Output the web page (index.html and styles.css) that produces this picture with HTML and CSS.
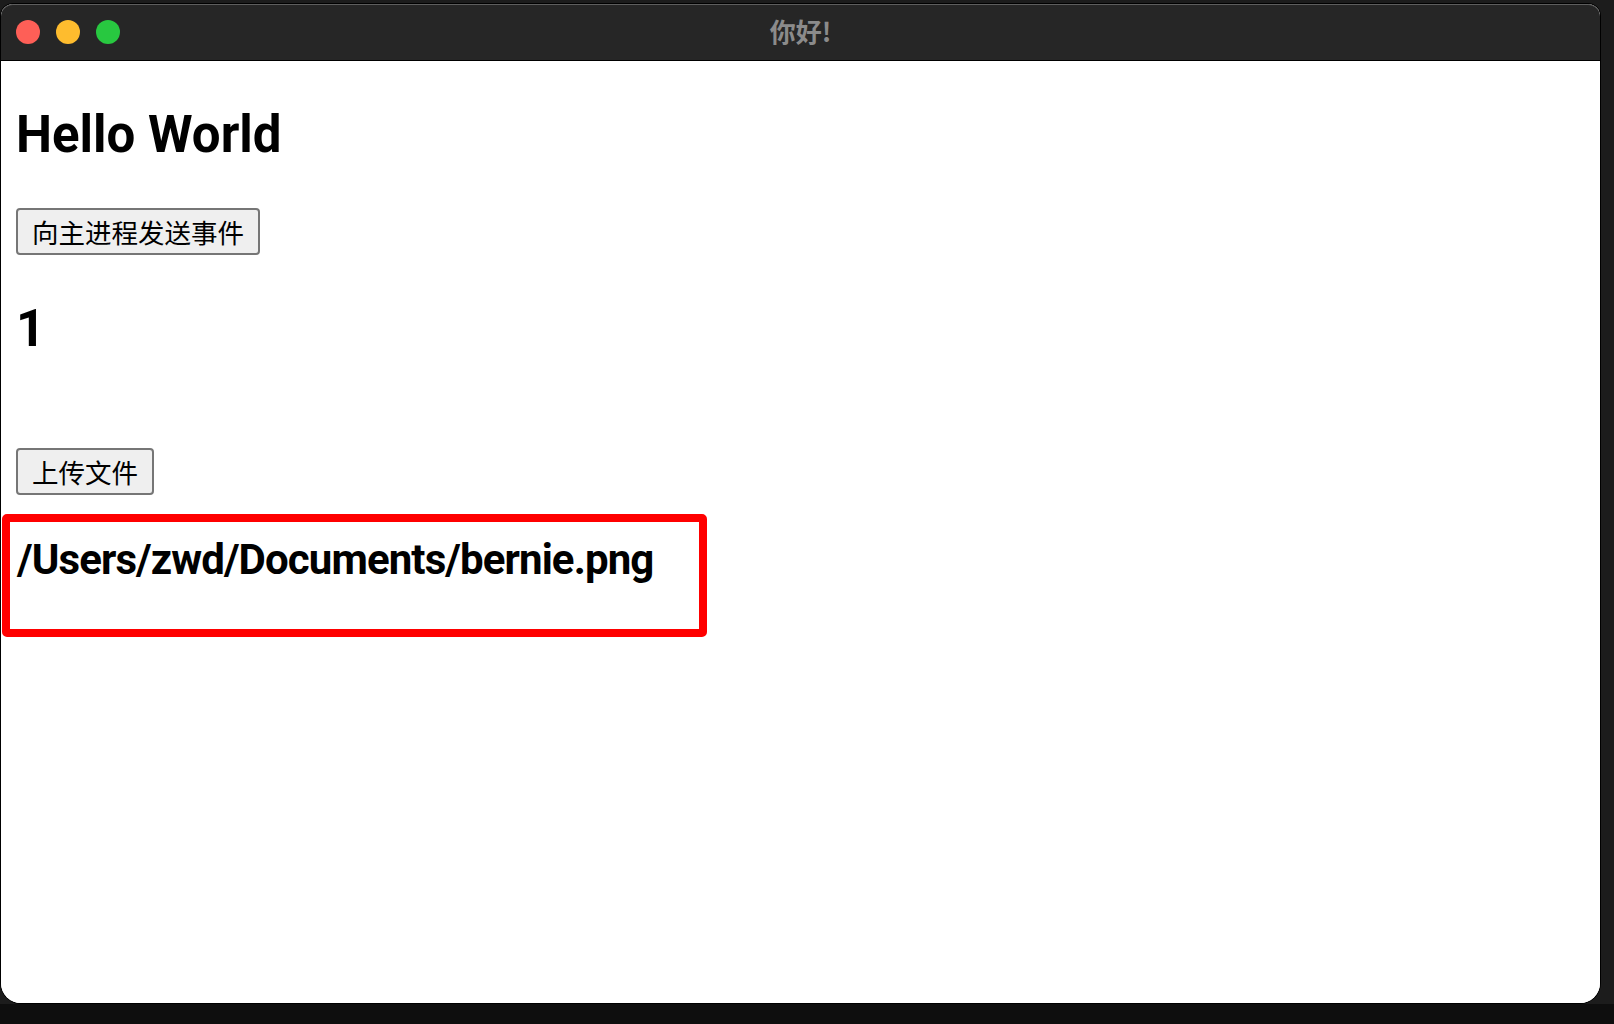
FILE: index.html
```html
<!DOCTYPE html>
<html lang="zh">
<head>
<meta charset="utf-8">
<title>你好!</title>
<link rel="stylesheet" href="styles.css">
</head>
<body>
<div class="desktop">
  <div class="window">
    <div class="titlebar">
      <div class="lights">
        <span class="light light-red"></span>
        <span class="light light-yellow"></span>
        <span class="light light-green"></span>
      </div>
      <div class="title">你好!</div>
      <div class="spacer"></div>
    </div>
    <div class="content">
      <h1 class="heading">Hello World</h1>
      <button class="btn">向主进程发送事件</button>
      <h1 class="heading count">1</h1>
      <button class="btn btn-upload">上传文件</button>
      <div class="path-box">
        <h2 class="path">/Users/zwd/Documents/bernie.png</h2>
      </div>
    </div>
  </div>
</div>
</body>
</html>
```

FILE: styles.css
```css
html, body {
  margin: 0;
  padding: 0;
}

body {
  width: 1614px;
  height: 1024px;
  overflow: hidden;
  background: #0e0e0e;
}

.desktop {
  height: 1024px;
  padding: 4px 0 0 1px;
  box-sizing: border-box;
  background: linear-gradient(to bottom, #1c1c1c 0, #1c1c1c 1004px, #0e0e0e 1004px);
}

.window {
  width: 1599px;
  height: 999px;
  border-radius: 12px 12px 20px 20px;
  overflow: hidden;
  background: #ffffff;
  box-shadow: 0 0 0 1px #000000;
  display: flex;
  flex-direction: column;
}

.titlebar {
  height: 56px;
  flex: 0 0 56px;
  background: #262626;
  border-bottom: 1px solid #000000;
  box-shadow: inset 0 1px 0 #5e5e5e;
  border-radius: 12px 12px 0 0;
  display: grid;
  grid-template-columns: 1fr auto 1fr;
  align-items: center;
}

.lights {
  display: flex;
  gap: 16px;
  padding-left: 15px;
}

.light {
  width: 24px;
  height: 24px;
  border-radius: 50%;
  display: block;
}

.light-red { background: #fe5f57; }
.light-yellow { background: #febc2e; }
.light-green { background: #28c840; }

.title {
  font-family: "Noto Sans CJK SC", "Liberation Sans", sans-serif;
  font-weight: 700;
  font-size: 26px;
  line-height: 30px;
  color: #8b8b8b;
  margin-top: -3px;
}

.content {
  flex: 1;
  background: #ffffff;
  padding-left: 15px;
  color: #000000;
}

.heading {
  font-family: Roboto, "Liberation Sans", sans-serif;
  font-weight: 700;
  font-size: 51px;
  line-height: 51px;
  margin: 48px 0 0 0;
}

.count {
  margin-top: 48px;
}

.btn {
  display: block;
  margin-top: 48px;
  font-family: "Noto Sans CJK SC", "Liberation Sans", sans-serif;
  font-size: 26.5px;
  line-height: 43px;
  padding: 0 14px;
  color: #000000;
  background: #efefef;
  border: 2px solid #767676;
  border-radius: 4px;
}

.btn-upload {
  margin-top: 94px;
}

.path-box {
  margin: 19px 0 0 -14px;
  width: 705px;
  box-sizing: border-box;
  border: 8px solid #ff0000;
  border-radius: 5px;
  padding: 17px 7px 48px;
}

.path {
  font-family: Roboto, "Liberation Sans", sans-serif;
  font-weight: 700;
  font-size: 42px;
  line-height: 42px;
  letter-spacing: -0.9px;
  margin: 0;
}
```
